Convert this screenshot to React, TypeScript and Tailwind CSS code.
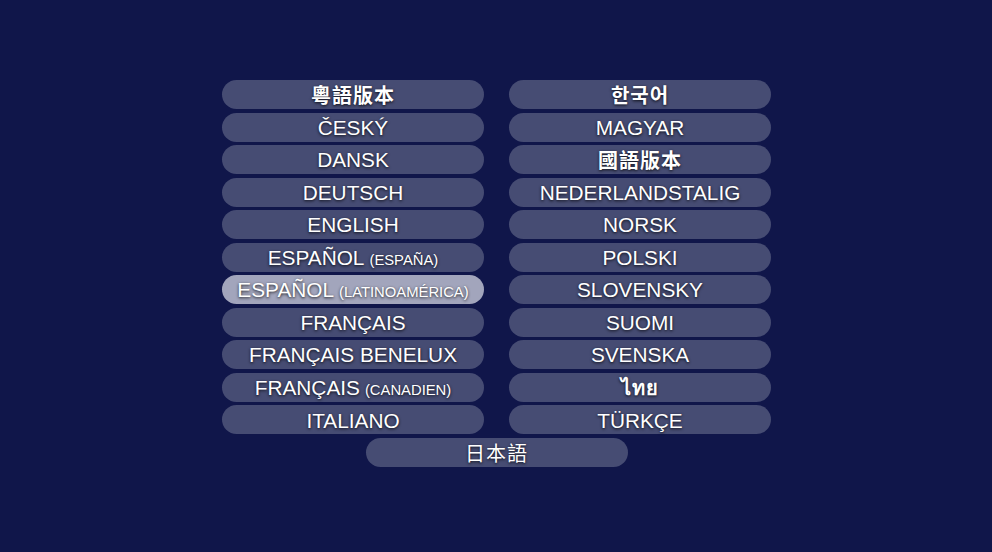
import React from "react";

type Item = { main: string; sub?: string; cjk?: boolean; bold?: boolean; active?: boolean };

const left: Item[] = [
  { main: "粵語版本", cjk: true, bold: true },
  { main: "ČESKÝ" },
  { main: "DANSK" },
  { main: "DEUTSCH" },
  { main: "ENGLISH" },
  { main: "ESPAÑOL", sub: "(ESPAÑA)" },
  { main: "ESPAÑOL", sub: "(LATINOAMÉRICA)", active: true },
  { main: "FRANÇAIS" },
  { main: "FRANÇAIS BENELUX" },
  { main: "FRANÇAIS", sub: "(CANADIEN)" },
  { main: "ITALIANO" },
];

const right: Item[] = [
  { main: "한국어", cjk: true, bold: true },
  { main: "MAGYAR" },
  { main: "國語版本", cjk: true, bold: true },
  { main: "NEDERLANDSTALIG" },
  { main: "NORSK" },
  { main: "POLSKI" },
  { main: "SLOVENSKY" },
  { main: "SUOMI" },
  { main: "SVENSKA" },
  { main: "ไทย", cjk: true, bold: true },
  { main: "TÜRKÇE" },
];

function Btn({ item }: { item: Item }) {
  return (
    <div
      className={
        "h-[29px] w-[262px] rounded-full flex items-center justify-center text-white leading-none whitespace-nowrap [text-shadow:0_1px_3px_rgba(0,0,0,0.85)] " +
        (item.active ? "bg-[#a2a5bc]" : "bg-[#464c73]")
      }
    >
      {item.cjk ? (
        <span
          className={
            "text-[20px] tracking-[1px] " + (item.bold ? "font-bold" : "font-normal")
          }
          style={{ fontFamily: '"Noto Sans CJK TC", "Noto Sans CJK KR", "Noto Sans", "Liberation Sans", sans-serif' }}
        >
          {item.main}
        </span>
      ) : (
        <span className="text-[20.8px] font-[Liberation_Sans,Arial,sans-serif] translate-y-[1px]">
          {item.main}
          {item.sub && <span className="text-[14.8px] ml-[5px]">{item.sub}</span>}
        </span>
      )}
    </div>
  );
}

export default function App() {
  return (
    <div className="w-[992px] h-[552px] bg-[#10164a] flex flex-col items-center pt-[80px] font-[Liberation_Sans,Arial,sans-serif]">
      <div className="flex gap-x-[25px] pl-[1px]">
        <div className="flex flex-col gap-y-[3.55px]">
          {left.map((it, i) => (
            <Btn key={i} item={it} />
          ))}
        </div>
        <div className="flex flex-col gap-y-[3.55px]">
          {right.map((it, i) => (
            <Btn key={i} item={it} />
          ))}
        </div>
      </div>
      <div className="mt-[3.55px] pl-[1px]">
        <Btn item={{ main: "日本語", cjk: true }} />
      </div>
    </div>
  );
}
